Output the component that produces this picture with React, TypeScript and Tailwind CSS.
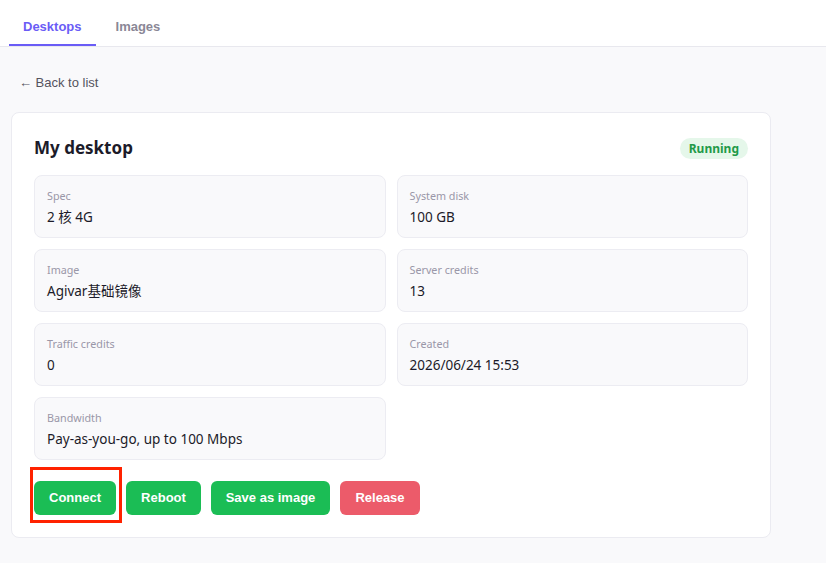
import React from "react";

const fields = [
  { label: "Spec", value: "2 核 4G" },
  { label: "System disk", value: "100 GB" },
  { label: "Image", value: "Agivar基础镜像" },
  { label: "Server credits", value: "13" },
  { label: "Traffic credits", value: "0" },
  { label: "Created", value: "2026/06/24 15:53" },
  { label: "Bandwidth", value: "Pay-as-you-go, up to 100 Mbps" },
];

const sans = "font-['Liberation_Sans',Arial,sans-serif]";
const ui = "font-['Noto_Sans','Noto_Sans_CJK_SC',sans-serif]";

export default function App() {
  return (
    <div className="min-h-[563px] bg-[#f9f9fb]">
      {/* TABS */}
      <div className={`flex h-[47px] items-end gap-[6px] border-b border-[#e8e8ee] bg-white pl-[9px] ${sans}`}>
        <button className="h-full border-b-[2px] border-[#6a5cf6] px-[14px] pt-[10px] text-[13px] font-bold text-[#6a5cf6]">
          Desktops
        </button>
        <button className="h-full border-b-[2px] border-transparent px-[14px] pt-[10px] text-[13px] font-bold text-[#8a8796]">
          Images
        </button>
      </div>

      <div className="px-[11px] pt-[28px]">
        <div className={`pl-[8px] text-[13px] leading-[16px] text-[#55535e] ${sans}`}>← Back to list</div>

        {/* CARD */}
        <div className={`mt-[21px] w-[760px] rounded-[8px] border border-[#ebebf1] bg-white px-[22px] pt-[22px] pb-[22px] ${ui}`}>
          <div className="flex items-center justify-between">
            <h1 className="text-[17px] font-bold leading-[26px] text-[#1c1b29]">My desktop</h1>
            <span className="rounded-full bg-[#e5f7ea] px-[9px] py-[2px] text-[12px] font-bold leading-[17px] text-[#1f9a48]">
              Running
            </span>
          </div>

          <div className="mt-[14px] grid grid-cols-2 gap-[11px]">
            {fields.map((f) => (
              <div
                key={f.label}
                className="h-[63px] rounded-[8px] border border-[#ececf2] bg-[#f9f9fb] px-[12px] pt-[12px]"
              >
                <div className="text-[10.75px] leading-[16px] text-[#9a97a8]">{f.label}</div>
                <div className="mt-[3px] text-[13.5px] leading-[20px] text-[#1c1b29]">{f.value}</div>
              </div>
            ))}
          </div>

          <div className={`mt-[21px] flex gap-[10px] ${sans}`}>
            <span className="relative">
              <button className="h-[34px] w-[82px] rounded-[6px] bg-[#1bbd55] text-[13px] font-bold text-white">
                Connect
              </button>
              <span className="pointer-events-none absolute -top-[14px] -bottom-[8px] -left-[4px] -right-[6px] border-[3px] border-[#ff2200]" />
            </span>
            <button className="h-[34px] w-[75px] rounded-[6px] bg-[#1bbd55] text-[13px] font-bold text-white">
              Reboot
            </button>
            <button className="h-[34px] w-[119px] rounded-[6px] bg-[#1bbd55] text-[13px] font-bold text-white">
              Save as image
            </button>
            <button className="h-[34px] w-[80px] rounded-[6px] bg-[#ec5b6a] text-[13px] font-bold text-white">
              Release
            </button>
          </div>
        </div>
      </div>
    </div>
  );
}
